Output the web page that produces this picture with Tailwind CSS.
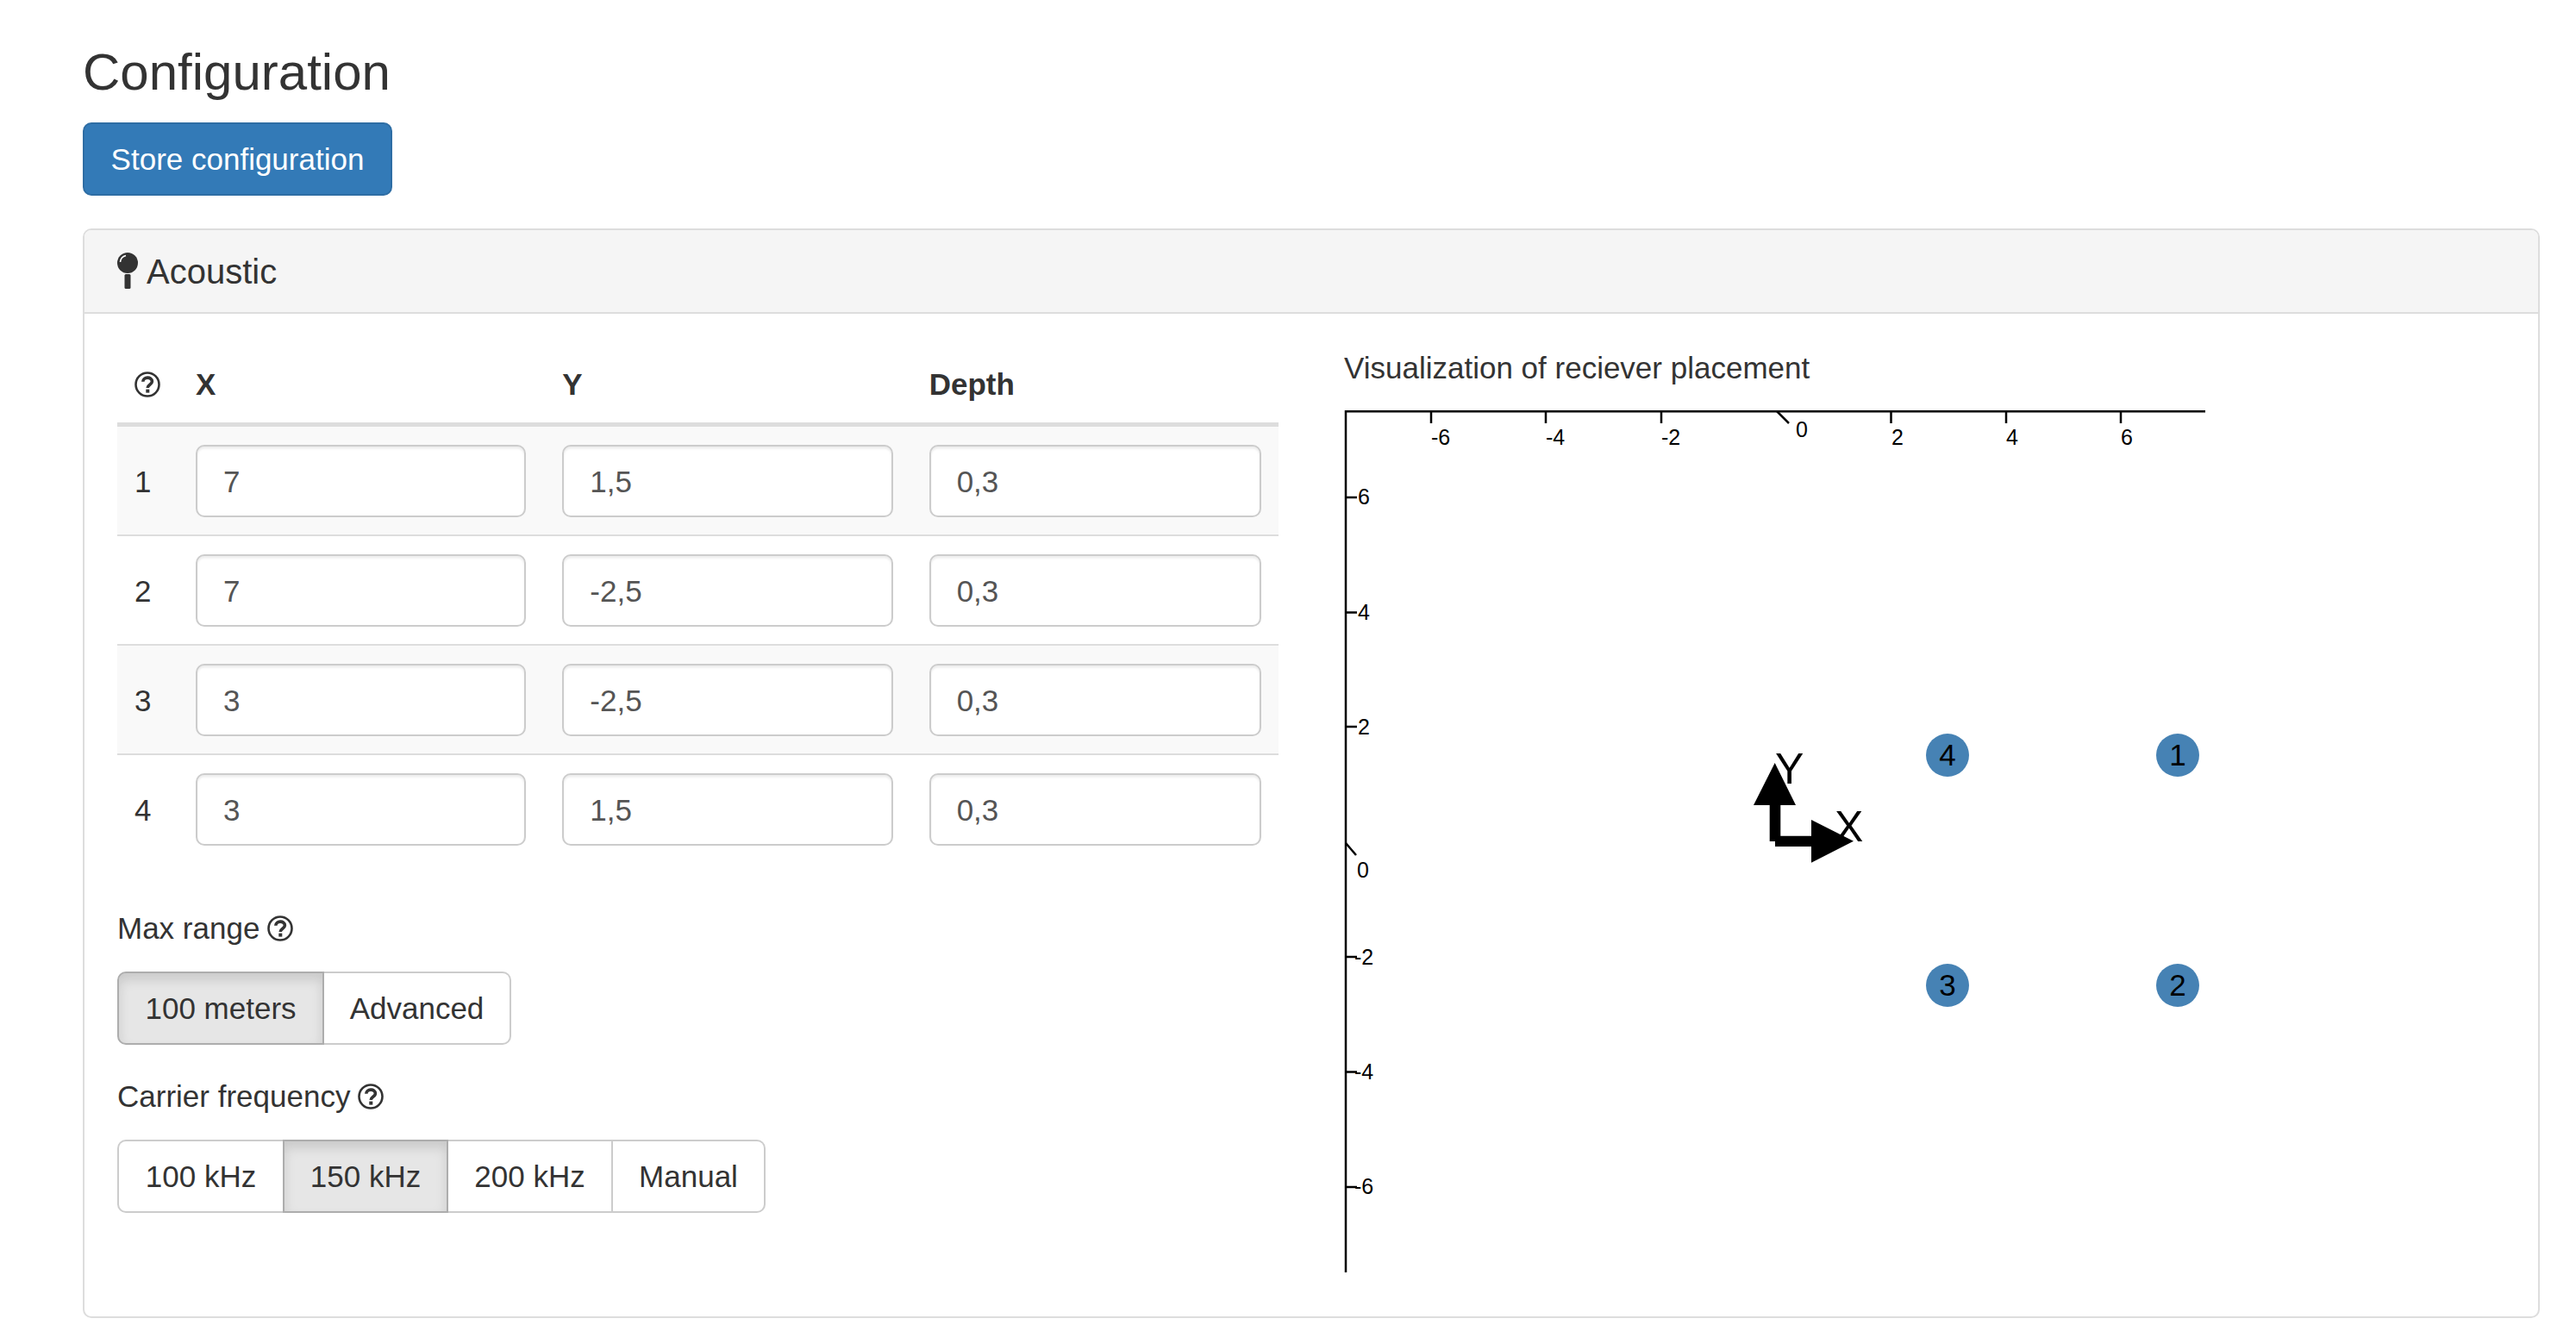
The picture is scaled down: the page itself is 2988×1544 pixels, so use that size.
<!DOCTYPE html>
<html lang="en">
<head>
  <meta charset="UTF-8" />
  <title>Configuration</title>
  <script src="https://cdn.jsdelivr.net/npm/@tailwindcss/browser@4"></script>
</head>
<body class="bg-white font-['Liberation_Sans',sans-serif] text-[35px] leading-[50px] text-[#333]">
  <div class="pl-[96px] pr-[42px] pt-[51px]">
    <h3 class="text-[60px] leading-[66px] font-normal">Configuration</h3>

    <button class="mt-[25px] h-[85px] px-[30px] w-[359px] rounded-[10px] border-2 border-[#2e6da4] bg-[#337ab7] text-white">Store configuration</button>

    <div class="mt-[38px] border-2 border-[#ddd] rounded-[10px]">
      <div class="flex items-center h-[97px] pl-[37px] bg-[#f5f5f5] border-b-2 border-[#ddd] rounded-t-[8px] text-[40px]">
        <svg class="w-[26px] h-[46px] mr-[9px]" viewBox="0 0 26 46">
          <circle cx="13" cy="13" r="12" fill="#333" />
          <path d="M4.5 12 A8.5 8.5 0 0 1 11 4.5" fill="none" stroke="#fff" stroke-width="1.6" />
          <rect x="9.5" y="26" width="7" height="17" rx="1.5" fill="#333" />
        </svg>
        Acoustic
      </div>

      <div class="flex pl-[38px] pt-[38px] pb-[51px]">
        <!-- left column: receiver table + option groups -->
        <div class="w-[1347px]">
          <table class="w-full table-fixed border-collapse">
            <thead>
              <tr class="border-b-[5px] border-[#ddd]">
                <th class="w-[71px] h-[90px] pl-[20px] text-left">
                  <svg class="w-[30px] h-[30px] block" viewBox="0 0 30 30">
                    <circle cx="15" cy="15" r="13.5" fill="none" stroke="#333" stroke-width="2.6" />
                    <path d="M9.8 11.8 C9.8 5.6 20.4 5.6 20.4 11.6 C20.4 15.4 15.2 15.2 15.2 19" fill="none" stroke="#333" stroke-width="3.6" />
                    <rect x="13.3" y="20.6" width="4" height="4" fill="#333" />
                  </svg>
                </th>
                <th class="px-[20px] text-left font-bold">X</th>
                <th class="px-[20px] text-left font-bold">Y</th>
                <th class="px-[20px] text-left font-bold">Depth</th>
              </tr>
            </thead>
            <tbody>
              <tr class="bg-[#f9f9f9]">
                <td class="pl-[20px] pt-[3px]">1</td>
                <td class="pl-[20px] pr-[22px] pt-[21px] pb-[20px]"><input value="7" class="block w-full h-[84px] px-[30px] pt-[2px] rounded-[10px] border-2 border-[#ccc] bg-white text-[#555] shadow-[inset_0_2.5px_2.5px_rgba(0,0,0,0.075)]" /></td>
                <td class="pl-[20px] pr-[22px] pt-[21px] pb-[20px]"><input value="1,5" class="block w-full h-[84px] px-[30px] pt-[2px] rounded-[10px] border-2 border-[#ccc] bg-white text-[#555] shadow-[inset_0_2.5px_2.5px_rgba(0,0,0,0.075)]" /></td>
                <td class="px-[20px] pt-[21px] pb-[20px]"><input value="0,3" class="block w-full h-[84px] px-[30px] pt-[2px] rounded-[10px] border-2 border-[#ccc] bg-white text-[#555] shadow-[inset_0_2.5px_2.5px_rgba(0,0,0,0.075)]" /></td>
              </tr>
              <tr class="border-t-2 border-[#ddd]">
                <td class="pl-[20px] pt-[3px]">2</td>
                <td class="pl-[20px] pr-[22px] pt-[21px] pb-[20px]"><input value="7" class="block w-full h-[84px] px-[30px] pt-[2px] rounded-[10px] border-2 border-[#ccc] bg-white text-[#555] shadow-[inset_0_2.5px_2.5px_rgba(0,0,0,0.075)]" /></td>
                <td class="pl-[20px] pr-[22px] pt-[21px] pb-[20px]"><input value="-2,5" class="block w-full h-[84px] px-[30px] pt-[2px] rounded-[10px] border-2 border-[#ccc] bg-white text-[#555] shadow-[inset_0_2.5px_2.5px_rgba(0,0,0,0.075)]" /></td>
                <td class="px-[20px] pt-[21px] pb-[20px]"><input value="0,3" class="block w-full h-[84px] px-[30px] pt-[2px] rounded-[10px] border-2 border-[#ccc] bg-white text-[#555] shadow-[inset_0_2.5px_2.5px_rgba(0,0,0,0.075)]" /></td>
              </tr>
              <tr class="bg-[#f9f9f9] border-t-2 border-[#ddd]">
                <td class="pl-[20px] pt-[3px]">3</td>
                <td class="pl-[20px] pr-[22px] pt-[21px] pb-[20px]"><input value="3" class="block w-full h-[84px] px-[30px] pt-[2px] rounded-[10px] border-2 border-[#ccc] bg-white text-[#555] shadow-[inset_0_2.5px_2.5px_rgba(0,0,0,0.075)]" /></td>
                <td class="pl-[20px] pr-[22px] pt-[21px] pb-[20px]"><input value="-2,5" class="block w-full h-[84px] px-[30px] pt-[2px] rounded-[10px] border-2 border-[#ccc] bg-white text-[#555] shadow-[inset_0_2.5px_2.5px_rgba(0,0,0,0.075)]" /></td>
                <td class="px-[20px] pt-[21px] pb-[20px]"><input value="0,3" class="block w-full h-[84px] px-[30px] pt-[2px] rounded-[10px] border-2 border-[#ccc] bg-white text-[#555] shadow-[inset_0_2.5px_2.5px_rgba(0,0,0,0.075)]" /></td>
              </tr>
              <tr class="border-t-2 border-[#ddd]">
                <td class="pl-[20px] pt-[3px]">4</td>
                <td class="pl-[20px] pr-[22px] pt-[21px] pb-[20px]"><input value="3" class="block w-full h-[84px] px-[30px] pt-[2px] rounded-[10px] border-2 border-[#ccc] bg-white text-[#555] shadow-[inset_0_2.5px_2.5px_rgba(0,0,0,0.075)]" /></td>
                <td class="pl-[20px] pr-[22px] pt-[21px] pb-[20px]"><input value="1,5" class="block w-full h-[84px] px-[30px] pt-[2px] rounded-[10px] border-2 border-[#ccc] bg-white text-[#555] shadow-[inset_0_2.5px_2.5px_rgba(0,0,0,0.075)]" /></td>
                <td class="px-[20px] pt-[21px] pb-[20px]"><input value="0,3" class="block w-full h-[84px] px-[30px] pt-[2px] rounded-[10px] border-2 border-[#ccc] bg-white text-[#555] shadow-[inset_0_2.5px_2.5px_rgba(0,0,0,0.075)]" /></td>
              </tr>
            </tbody>
          </table>

          <div class="mt-[51px] flex items-center gap-[9px]">
            Max range
            <svg class="w-[30px] h-[30px]" viewBox="0 0 30 30">
              <circle cx="15" cy="15" r="13.5" fill="none" stroke="#333" stroke-width="2.6" />
              <path d="M9.8 11.8 C9.8 5.6 20.4 5.6 20.4 11.6 C20.4 15.4 15.2 15.2 15.2 19" fill="none" stroke="#333" stroke-width="3.6" />
              <rect x="13.3" y="20.6" width="4" height="4" fill="#333" />
            </svg>
          </div>
          <div class="mt-[25px] flex w-fit h-[85px]">
            <button class="w-[240px] pt-[2px] rounded-l-[10px] border-2 border-[#adadad] bg-[#e6e6e6] shadow-[inset_0_7.5px_12.5px_rgba(0,0,0,0.125)]">100 meters</button>
            <button class="w-[217px] pt-[2px] rounded-r-[10px] border-2 border-l-0 border-[#ccc]">Advanced</button>
          </div>

          <div class="mt-[35px] flex items-center gap-[9px]">
            Carrier frequency
            <svg class="w-[30px] h-[30px]" viewBox="0 0 30 30">
              <circle cx="15" cy="15" r="13.5" fill="none" stroke="#333" stroke-width="2.6" />
              <path d="M9.8 11.8 C9.8 5.6 20.4 5.6 20.4 11.6 C20.4 15.4 15.2 15.2 15.2 19" fill="none" stroke="#333" stroke-width="3.6" />
              <rect x="13.3" y="20.6" width="4" height="4" fill="#333" />
            </svg>
          </div>
          <div class="mt-[25px] flex w-fit h-[85px]">
            <button class="w-[192px] pt-[2px] rounded-l-[10px] border-2 border-r-0 border-[#ccc]">100 kHz</button>
            <button class="w-[192px] pt-[2px] border-2 border-[#adadad] bg-[#e6e6e6] shadow-[inset_0_7.5px_12.5px_rgba(0,0,0,0.125)]">150 kHz</button>
            <button class="w-[191px] pt-[2px] border-2 border-l-0 border-[#ccc]">200 kHz</button>
            <button class="w-[177px] pt-[2px] rounded-r-[10px] border-2 border-l-0 border-[#ccc]">Manual</button>
          </div>
        </div>

        <!-- right column: placement chart -->
        <div class="ml-[76px]">
          <div>Visualization of reciever placement</div>
          <svg class="block mt-[24px] font-['Liberation_Sans',sans-serif]" width="1001" height="1000" viewBox="1559 476 1001 1000">
            <g stroke="#000" stroke-width="2.5" fill="none">
              <path d="M2558 477.2 H1561 V1476" />
              <path d="M1660 477 V491 M1793 477 V491 M1927 477 V491 M2061 477 L2075 491 M2193.5 477 V491 M2327 477 V491 M2460 477 V491" />
              <path d="M1561 577 H1574 M1561 710.5 H1574 M1561 843 H1574 M1561 978 L1573 992 M1561 1110 H1574 M1561 1243.5 H1574 M1561 1377 H1574" />
            </g>
            <g font-size="25" fill="#000">
              <text x="1660" y="516">-6</text>
              <text x="1793" y="516">-4</text>
              <text x="1927" y="516">-2</text>
              <text x="2083" y="507">0</text>
              <text x="2194" y="516">2</text>
              <text x="2327" y="516">4</text>
              <text x="2460" y="516">6</text>
              <text x="1575" y="585">6</text>
              <text x="1575" y="719">4</text>
              <text x="1575" y="852">2</text>
              <text x="1574" y="1018">0</text>
              <text x="1571" y="1119">-2</text>
              <text x="1571" y="1252">-4</text>
              <text x="1571" y="1385">-6</text>
            </g>
            <g fill="#4682b4">
              <circle cx="2526" cy="876" r="25" />
              <circle cx="2526" cy="1143" r="25" />
              <circle cx="2259" cy="1143" r="25" />
              <circle cx="2259" cy="876" r="25" />
            </g>
            <g font-size="35" fill="#000" text-anchor="middle">
              <text x="2526" y="888">1</text>
              <text x="2526" y="1155">2</text>
              <text x="2259" y="1155">3</text>
              <text x="2259" y="888">4</text>
            </g>
            <g font-size="50" fill="#000">
              <text x="2059" y="909">Y</text>
              <text x="2128" y="976">X</text>
            </g>
            <path d="M2058.7 885 L2083 934 H2065.3 V976 H2052.7 V934 H2034 Z" fill="#000" />
            <path d="M2150 975.7 L2101 1000.7 V982 H2059 V969.7 H2101 V951 Z" fill="#000" />
          </svg>
        </div>
      </div>
    </div>
  </div>
</body>
</html>
